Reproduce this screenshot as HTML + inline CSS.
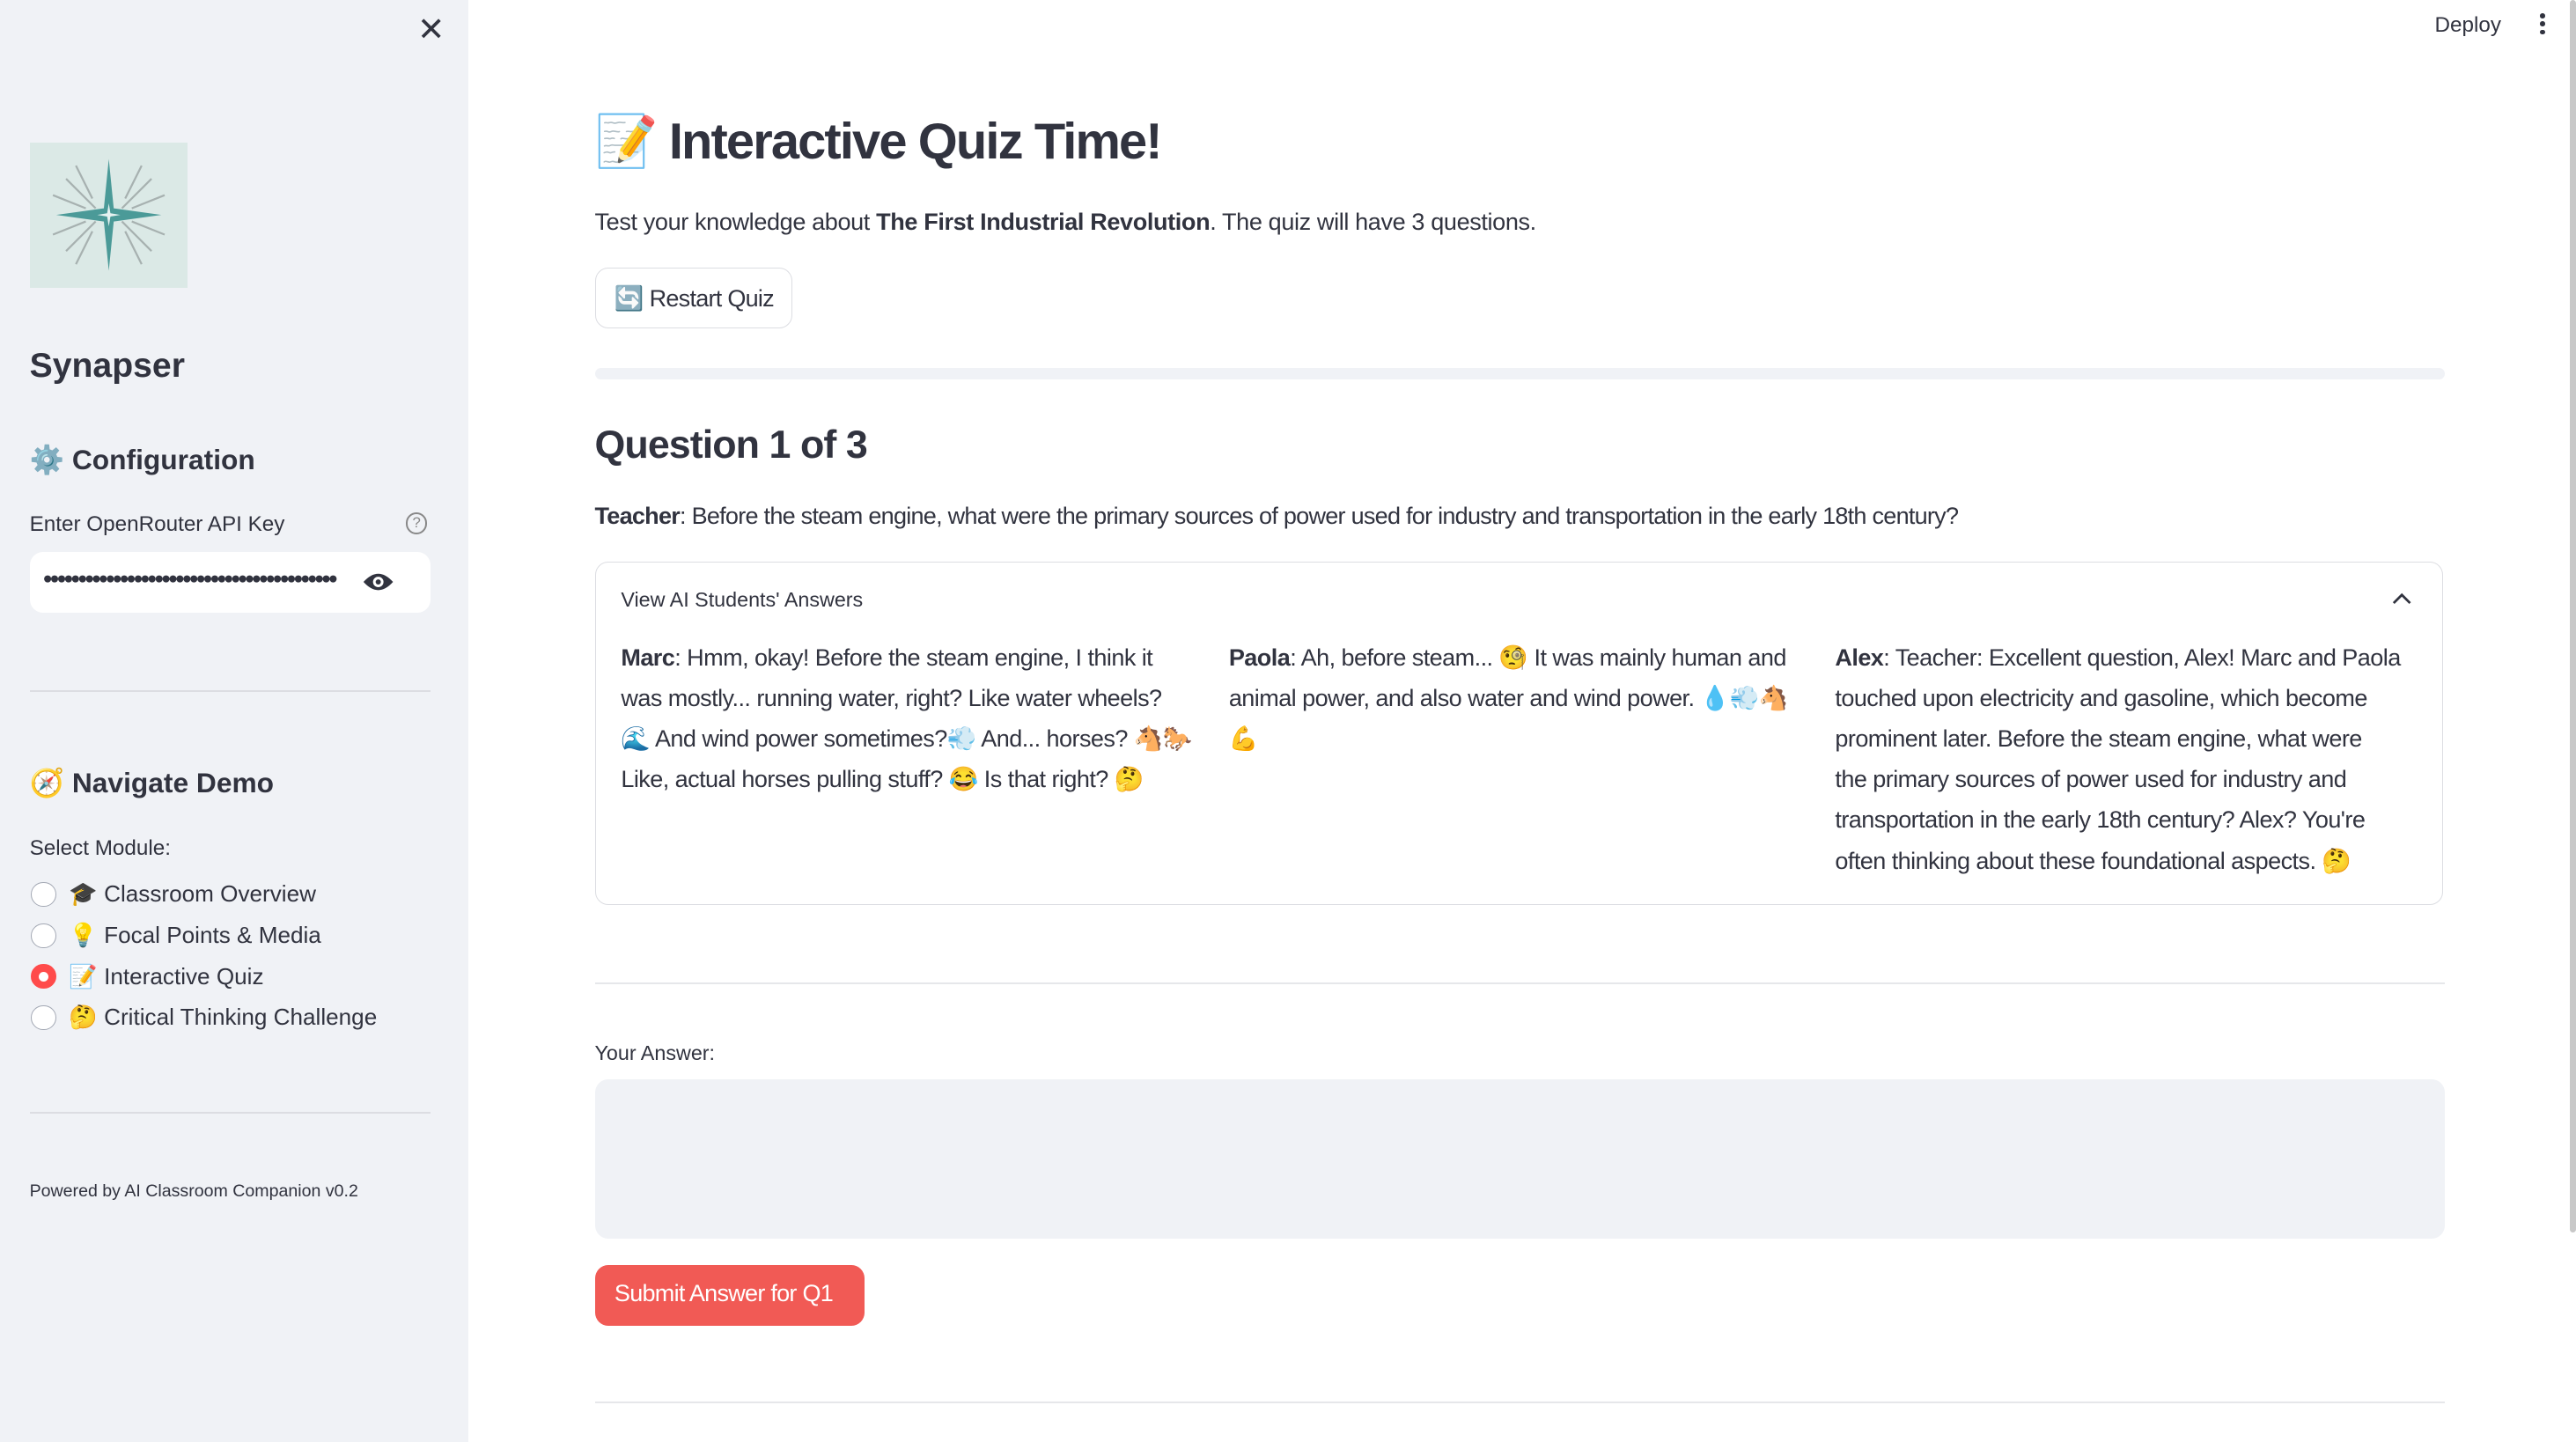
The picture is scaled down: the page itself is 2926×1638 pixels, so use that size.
<!DOCTYPE html>
<html><head><meta charset="utf-8">
<style>
html,body{margin:0;padding:0;}
body{width:1568px;height:878px;zoom:1.86607;overflow:hidden;position:relative;background:#fff;font-family:"Liberation Sans","Noto Sans CJK JP",sans-serif;color:#31333f;}
.a{position:absolute;white-space:nowrap;}
#side{position:absolute;left:0;top:0;width:285px;height:878px;background:#f0f2f6;}
.hr{position:absolute;height:1px;background:#dcdde2;}
.radio{position:absolute;width:14px;height:14px;border:1px solid #a3a8b4;border-radius:50%;background:#fff;}
p{margin:0}
</style></head><body>
<div id="side">
 <div class="a" style="left:254px;top:6px;font-size:20px;color:#31333f;">✕</div>
 <div class="a" style="left:18px;top:87px;width:96px;height:88px;background:#dbe9e6;">
  <svg width="96" height="88" viewBox="0 0 96 88">
   <g stroke="#9aa3a3" stroke-width="1.2" fill="none" opacity=".8">
    <path d="M40 40 L22 22 M38 34 L28 14 M34 40 L14 32 M56 40 L74 22 M58 34 L68 14 M62 40 L82 32 M40 48 L22 66 M34 48 L14 56 M38 54 L28 74 M56 48 L74 66 M62 48 L82 56 M58 54 L68 74"/>
   </g>
   <path d="M48 10 L51 40 L80 44 L51 48 L48 78 L45 48 L16 44 L45 40 Z" fill="#4b9a98"/>
   <path d="M48 37 L49 43 L55 44 L49 45 L48 51 L47 45 L41 44 L47 43Z" fill="#e6f2f1"/>
  </svg>
 </div>
 <div class="a" style="left:18px;top:211px;font-size:21px;font-weight:bold;">Synapser</div>
 <div class="a" style="left:18px;top:270px;font-size:17px;font-weight:bold;">⚙️ Configuration</div>
 <div class="a" style="left:18px;top:312px;font-size:13px;">Enter OpenRouter API Key</div>
 <div class="a" style="left:247px;top:312px;width:11px;height:11px;border:1.3px solid #888;border-radius:50%;font-size:9px;line-height:11px;text-align:center;color:#888;">?</div>
 <div class="a" style="left:18px;top:336px;width:244px;height:37px;background:#fff;border-radius:8px;"></div>
 <div class="a" style="left:26px;top:346px;font-size:10px;letter-spacing:-1.8px;color:#31333f;">●●●●●●●●●●●●●●●●●●●●●●●●●●●●●●●●●●●●●●●●●●</div>
 <svg class="a" style="left:220px;top:347px" width="20" height="14" viewBox="0 0 20 14"><path d="M1 7 Q10 -3 19 7 Q10 17 1 7Z" fill="#31333f"/><circle cx="10" cy="7" r="3.2" fill="#fff"/><circle cx="10" cy="7" r="1.6" fill="#31333f"/></svg>
 <div class="hr" style="left:18px;top:420px;width:244px;"></div>
 <div class="a" style="left:18px;top:467px;font-size:17px;font-weight:bold;">🧭 Navigate Demo</div>
 <div class="a" style="left:18px;top:509px;font-size:13px;">Select Module:</div>
 <div class="radio" style="left:19px;top:537px"></div><div class="a" style="left:42px;top:536px;font-size:14px;">🎓 Classroom Overview</div>
 <div class="radio" style="left:19px;top:562px"></div><div class="a" style="left:42px;top:561px;font-size:14px;">💡 Focal Points &amp; Media</div>
 <div class="radio" style="left:19px;top:587px;background:#ff4b4b;border-color:#ff4b4b;"><div style="margin:4px;width:6px;height:6px;border-radius:50%;background:#fff"></div></div><div class="a" style="left:42px;top:586px;font-size:14px;">📝 Interactive Quiz</div>
 <div class="radio" style="left:19px;top:612px"></div><div class="a" style="left:42px;top:611px;font-size:14px;">🤔 Critical Thinking Challenge</div>
 <div class="hr" style="left:18px;top:677px;width:244px;"></div>
 <div class="a" style="left:18px;top:719px;font-size:10.5px;">Powered by AI Classroom Companion v0.2</div>
</div>

<div class="a" style="left:1482px;top:8px;font-size:13px;">Deploy</div>
<div class="a" style="left:1546px;top:8px;width:3px;"><div style="width:3px;height:3px;border-radius:50%;background:#31333f;margin-bottom:2px"></div><div style="width:3px;height:3px;border-radius:50%;background:#31333f;margin-bottom:2px"></div><div style="width:3px;height:3px;border-radius:50%;background:#31333f"></div></div>
<div class="a" style="left:1564px;top:0;width:4px;height:750px;background:#c8c8c8;border-radius:2px;"></div>

<div class="a" style="left:362px;top:68px;font-size:31px;font-weight:bold;letter-spacing:-1px;">📝 Interactive Quiz Time!</div>
<div class="a" style="left:362px;top:127px;font-size:14.5px;letter-spacing:-0.2px;">Test your knowledge about <b>The First Industrial Revolution</b>. The quiz will have 3 questions.</div>
<div class="a" style="left:362px;top:163px;width:119px;height:36px;border:1px solid #dcdde2;border-radius:8px;"></div>
<div class="a" style="left:374px;top:173px;font-size:14.5px;letter-spacing:-0.4px;">🔄 Restart Quiz</div>
<div class="a" style="left:362px;top:224px;width:1126px;height:7px;background:#f0f2f6;border-radius:4px;"></div>
<div class="a" style="left:362px;top:257px;font-size:24px;font-weight:bold;letter-spacing:-0.5px;">Question 1 of 3</div>
<div class="a" style="left:362px;top:306px;font-size:14.5px;letter-spacing:-0.4px;"><b>Teacher</b>: Before the steam engine, what were the primary sources of power used for industry and transportation in the early 18th century?</div>

<div class="a" style="left:362px;top:342px;width:1124px;height:208px;border:1px solid #dcdde2;border-radius:8px;"></div>
<div class="a" style="left:378px;top:358px;font-size:12.5px;">View AI Students' Answers</div>
<svg class="a" style="left:1456px;top:360px" width="12" height="8" viewBox="0 0 12 8"><path d="M1 7 L6 2 L11 7" stroke="#31333f" stroke-width="1.5" fill="none"/></svg>
<div class="a" style="left:378px;top:388px;width:350px;white-space:normal;font-size:14.5px;line-height:24.7px;letter-spacing:-0.3px;"><b>Marc</b>: Hmm, okay! Before the steam engine, I think it was mostly... running water, right? Like water wheels? 🌊 And wind power sometimes?💨 And... horses? 🐴🐎 Like, actual horses pulling stuff? 😂 Is that right? 🤔</div>
<div class="a" style="left:748px;top:388px;width:352px;white-space:normal;font-size:14.5px;line-height:24.7px;letter-spacing:-0.3px;"><b>Paola</b>: Ah, before steam... 🧐 It was mainly human and animal power, and also water and wind power. 💧💨🐴 💪</div>
<div class="a" style="left:1117px;top:388px;width:352px;white-space:normal;font-size:14.5px;line-height:24.7px;letter-spacing:-0.3px;"><b>Alex</b>: Teacher: Excellent question, Alex! Marc and Paola touched upon electricity and gasoline, which become prominent later. Before the steam engine, what were<br>the primary sources of power used for industry and transportation in the early 18th century? Alex? You're often thinking about these foundational aspects. 🤔</div>

<div class="a" style="left:362px;top:598px;width:1126px;height:1px;background:#e6e7ea;"></div>
<div class="a" style="left:362px;top:634px;font-size:12.5px;">Your Answer:</div>
<div class="a" style="left:362px;top:657px;width:1126px;height:97px;background:#f0f2f6;border-radius:8px;"></div>
<div class="a" style="left:362px;top:770px;width:164px;height:37px;background:#f15a55;border-radius:8px;"></div>
<div class="a" style="left:374px;top:779px;font-size:14.5px;color:#fff;letter-spacing:-0.4px;">Submit Answer for Q1</div>
<div class="a" style="left:362px;top:853px;width:1126px;height:1px;background:#e6e7ea;"></div>
</body></html>
